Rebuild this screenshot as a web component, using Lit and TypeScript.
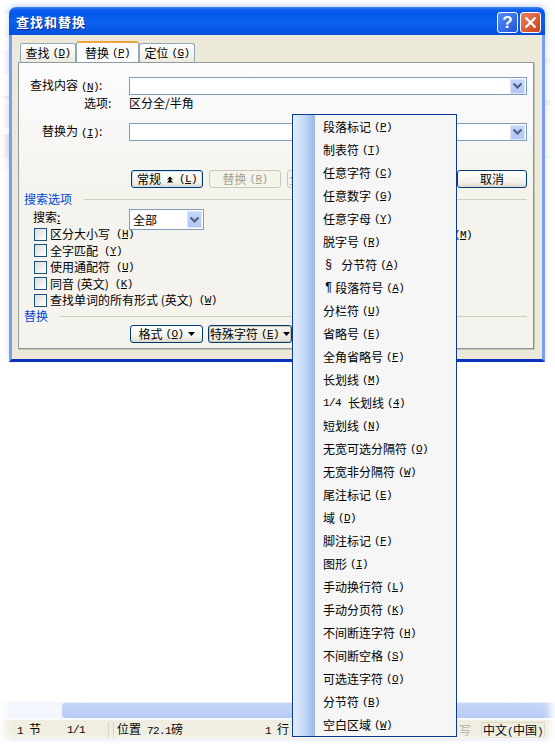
import { LitElement, html, css, svg } from "lit";
import { customElement } from "lit/decorators.js";

const k = (c: string) => html`<span class="k">(<u>${c}</u>)</span>`;
const chevron = html`<span class="drop"><svg width="11" height="8" viewBox="0 0 11 8"><path d="M1.5 1.5 L5.5 5.5 L9.5 1.5" fill="none" stroke="#4d6185" stroke-width="2.2"/></svg></span>`;
const tri = svg`<path d="M0 0H7L3.5 4Z" fill="#000"/>`;
const arrow = html`<svg class="tri" width="7" height="4" viewBox="0 0 7 4">${tri}</svg>`;

const menu: [string, string][] = [
  ["段落标记", "P"], ["制表符", "T"], ["任意字符", "C"], ["任意数字", "G"], ["任意字母", "Y"], ["脱字号", "R"],
  ["§§分节符", "A"], ["¶¶段落符号", "A"], ["分栏符", "U"], ["省略号", "E"], ["全角省略号", "F"], ["长划线", "M"],
  ["1/4 长划线", "4"], ["短划线", "N"], ["无宽可选分隔符", "O"], ["无宽非分隔符", "W"], ["尾注标记", "E"], ["域", "D"],
  ["脚注标记", "F"], ["图形", "I"], ["手动换行符", "L"], ["手动分页符", "K"], ["不间断连字符", "H"], ["不间断空格", "S"],
  ["可选连字符", "O"], ["分节符", "B"], ["空白区域", "W"],
];

const checks: [string, string][] = [
  ["区分大小写", "H"], ["全字匹配", "Y"], ["使用通配符", "U"], ["同音 (英文)", "K"], ["查找单词的所有形式 (英文)", "W"],
];

@customElement("app-root")
export class AppRoot extends LitElement {
  static styles = css`
    :host { display: block; width: 555px; height: 745px; position: relative; overflow: hidden; background: #fff;
      font: 12px/16px "Noto Sans CJK SC", sans-serif; color: #000; }
    .k { font: 11px/16px "Liberation Mono", monospace; letter-spacing: -0.6px; margin-left: 3px; }
    .m { font: 11px/16px "Liberation Mono", monospace; letter-spacing: -0.6px; }
    .gap { margin-left: 6px; }
    .desk { height: 739px; display: flex; flex-direction: column; }
    .doc { flex: 1; }
    .scroll { height: 16px; margin-bottom: 2px; background: #f4f6fd; display: flex; padding-left: 62px; border-top: 1px solid #eef1fb; box-sizing: border-box; }
    .thumb { flex: 1; background: linear-gradient(#c6d6f8, #b7ccf5); border-radius: 3px 0 0 3px; }
    .status { height: 19px; background: #f0eee1; display: flex; align-items: center; padding-left: 17px; box-shadow: 0 2px 5px rgba(130,155,235,.35); }
    .sec { white-space: nowrap; }
    .s1 { width: 50px; }
    .s2 { width: 41px; }
    .sep { width: 6px; height: 16px; border-left: 1px solid #d8d5c4; border-right: 1px solid #d8d5c4; margin-right: 3px; box-sizing: border-box; }
    .s3 { width: 148px; }
    .s4 { width: 194px; }
    .s5 { width: 22px; color: #b5b3a6; }
    .s6 { width: 64px; border: 1px solid #dbd8c6; box-sizing: border-box; padding-left: 1px; height: 16px; line-height: 14px; }
    .edge { position: absolute; top: 0; width: 11px; height: 190px; }
    .edge.l { left: 0; background: linear-gradient(#f1f3fc 0 10px, #e6e8f0 10px 14px, #f6f7fc 14px 30px, #eceef5 30px 38px, #fff 38px 50px, #e9eefb 50px 74px, #fff 74px 96px, #d5dcea 96px 99px, #f6f7fb 99px 104px, #ebecef 104px 128px, #fff 128px 134px, #d9dbe0 134px 158px, #f2f2f2 158px 170px, #fff 170px);
      -webkit-mask-image: linear-gradient(to left, #000, rgba(0,0,0,.35)); }
    .edge.r { right: 0; background: linear-gradient(#f1f3fc 0 46px, #f6f8fd 46px 58px, #e9ecf5 58px 64px, #f6f8fd 64px 100px, #e3e6ee 100px 105px, #f7f8fb 105px 155px, #eceef3 155px 158px, #fff 158px);
      -webkit-mask-image: linear-gradient(to right, #000, rgba(0,0,0,.2)); }
    .topband { position: absolute; left: 0; right: 0; top: 0; height: 8px; background: linear-gradient(#fbfcff, #eef1fc); }
    .vig { position: absolute; inset: 0; box-shadow: inset 0 0 9px 5px #fff; pointer-events: none; }

    .dialog { position: absolute; left: 9px; top: 7px; width: 536px; height: 355px; display: flex; flex-direction: column; box-shadow: 0 -2px 5px rgba(120,145,235,.25); border-radius: 7px 7px 0 0; }
    .title { height: 28px; border-radius: 7px 7px 0 0; background: linear-gradient(#3f86f4 0, #0b5df0 3px, #0458e6 7px, #0a62ee 14px, #0555e4 24px, #0a4fd8 28px);
      display: flex; align-items: center; padding: 0 4px 0 7px; gap: 2px; }
    .title b { flex: 1; color: #fff; font-size: 13px; letter-spacing: 1px; font-weight: 700; text-shadow: 1px 1px 0 #0a2a90; padding-top: 2px; }
    .wb { width: 21px; height: 21px; box-sizing: border-box; border: 1px solid #fff; border-radius: 3px; display: flex; align-items: center; justify-content: center; margin-top: 2px; }
    .help { background: linear-gradient(135deg, #5a8cf5, #1d55d8); color: #fff; font: 700 17px/19px "Liberation Sans", sans-serif; }
    .close { background: linear-gradient(135deg, #e9825f, #cf3f14); }
    .body { flex: 1; min-height: 0; background: #ece9d8; border: solid #7a9ef2; border-width: 0 3px; border-bottom: 3px solid #0a30c4; padding: 7px 8px 10px 6px; display: flex; flex-direction: column; }
    .tabs { display: flex; padding-left: 2px; height: 20px; position: relative; z-index: 1; }
    .tab { width: 56px; height: 19px; margin-top: 1px; box-sizing: border-box; border: 1px solid #91a7b4; border-bottom: 0; border-radius: 3px 3px 0 0; background: linear-gradient(#fff, #ecebe0); display: flex; align-items: center; justify-content: center; white-space: nowrap; }
    .tab.on { width: 63px; height: 21px; margin-top: -1px; background: #fcfcfe; border-top: 2px solid #f0a33a; border-left-color: #91a7b4; }
    .panel { flex: 1; min-height: 0; border: 1px solid #919b9c; border-right-color: #8d9697; border-bottom-color: #8d9697; box-shadow: 1px 1px 0 #c4c2b4; background: linear-gradient(#fcfcfe, #f4f3ee 45%); padding: 14px 6px 0 10px; display: flex; flex-direction: column; }
    .grid { display: grid; grid-template-columns: 100px 1fr; align-items: center; }
    .lab { white-space: nowrap; }
    .lab.a { margin-left: 1px; }
    .lab.b { margin-left: 55px; }
    .lab.c { margin-left: 13px; }
    .field { height: 18px; box-sizing: border-box; border: 1px solid #7f9db9; background: #fff; display: flex; justify-content: flex-end; align-items: center; padding-right: 1px; }
    .drop { width: 15px; height: 15px; background: linear-gradient(#c6d6fa, #b3c7f5); border: 1px solid #dde6fb; box-sizing: border-box; display: flex; align-items: center; justify-content: center; }
    .grid.opt { height: 28px; align-items: start; }
    .btns { display: flex; gap: 6px; margin: 29px 0 0 102px; height: 18px; }
    .btn { height: 18px; box-sizing: border-box; border: 1px solid #003c74; border-radius: 3px; background: linear-gradient(#fff, #f3f2ea 70%, #dcd8cc); display: flex; align-items: center; justify-content: center; white-space: nowrap; width: 72px; }
    .btn.def { box-shadow: inset 0 0 0 1px #cfe0f5; }
    .btn.off { border-color: #c9c7ba; color: #a1a192; background: #f5f4ea; }
    .btn.off .k { color: #a1a192; }
    .btn.under { justify-content: flex-start; overflow: hidden; padding-left: 1px; }
    .btn.wide { width: 85px; flex: none; }
    .btn.cancel { margin-left: auto; width: 70px; }
    .btn .tri { margin-left: 4px; }
    .updn { margin: 0 6px; }
    .def .k { margin-left: 0; }
    .head { display: flex; align-items: center; gap: 12px; margin-left: -5px; color: #0046d5; height: 15px; white-space: nowrap; }
    .head i { flex: 1; height: 1px; background: #d2d1c0; margin-top: 1px; }
    .h1 { margin-top: 3px; }
    .search { display: grid; grid-template-columns: 100px 75px; height: 17px; margin-top: 3px; }
    .search span.t { margin-left: 4px; }
    .search u { text-decoration: underline; }
    .sel { height: 21px; box-sizing: border-box; border: 1px solid #7f9db9; background: #fff; display: flex; align-items: center; justify-content: space-between; padding: 0 1px 0 3px; position: relative; z-index: 1; }
    .sel .drop { height: 17px; }
    .row { height: 16.5px; display: flex; align-items: center; margin-left: 5px; white-space: nowrap; gap: 3px; }
    .box { width: 13px; height: 13px; box-sizing: border-box; border: 1px solid #1c5180; background: linear-gradient(135deg, #dcdcd7, #fff); }
    .right { margin-left: auto; margin-right: 55px; }
    .btns2 { display: flex; gap: 5px; margin: 1.5px 0 0 101px; }
    .btns2 .f1 { width: 73px; }
    .btns2 .f2 { width: 84px; background: linear-gradient(#f6f5ee, #e6e3d8); box-shadow: inset 0 0 0 1px #c9c6b5; }

    .menu { position: absolute; left: 292px; top: 114px; width: 165px; height: 623px; box-sizing: border-box; border: 1px solid #0a3a9c; background: #f6f6f6; display: flex; flex-direction: column; overflow: hidden; }
    .menu::before { content: ""; position: absolute; left: 0; top: 0; bottom: 0; width: 22px; background: linear-gradient(to right, #e3eefd, #c5d9f7 50%, #9bb8e8); }
    .it { height: 23px; flex: none; display: flex; align-items: center; padding-left: 30px; white-space: nowrap; position: relative; }
    .sym { font: 12px/16px "Liberation Mono", monospace; margin-left: 2px; margin-right: 8px; }
    .sym.s { margin-right: 9px; }
    .sym.p { margin-right: 3px; }
    .frac { margin-right: 7px; }
  `;

  private item(t: string, c: string) {
    if (t.startsWith("§§")) return html`<div class="it"><span class="sym s">§</span>${t.slice(2)}${k(c)}</div>`;
    if (t.startsWith("¶¶")) return html`<div class="it"><span class="sym p">¶</span>${t.slice(2)}${k(c)}</div>`;
    if (t.startsWith("1/4")) return html`<div class="it"><span class="m frac">1/4</span>长划线${k(c)}</div>`;
    return html`<div class="it">${t}${k(c)}</div>`;
  }

  render() {
    return html`
      <div class="desk">
        <div class="doc"></div>
        <div class="scroll"><div class="thumb"></div></div>
        <div class="status">
          <span class="sec s1"><span class="m">1</span><span class="gap">节</span></span>
          <span class="sec s2 m">1/1</span>
          <span class="sep"></span>
          <span class="sec s3">位置<span class="m gap">72.1</span>磅</span>
          <span class="sec s4"><span class="m">1</span><span class="gap">行</span></span>
          <span class="sec s5">写</span>
          <span class="sec s6">中文<span class="m">(</span>中国<span class="m">)</span></span>
        </div>
      </div>
      <div class="topband"></div>
      <div class="edge l"></div>
      <div class="edge r"></div>
      <div class="vig"></div>

      <div class="dialog">
        <div class="title">
          <b>查找和替换</b>
          <span class="wb help">?</span>
          <span class="wb close"><svg width="13" height="13" viewBox="0 0 13 13"><path d="M1.5 1.5 L11.5 11.5 M11.5 1.5 L1.5 11.5" stroke="#fff" stroke-width="2.4" fill="none"/></svg></span>
        </div>
        <div class="body">
          <div class="tabs">
            <div class="tab">查找${k("D")}</div>
            <div class="tab on">替换${k("P")}</div>
            <div class="tab">定位${k("G")}</div>
          </div>
          <div class="panel">
            <div class="grid">
              <span class="lab a">查找内容${k("N")}:</span>
              <div class="field">${chevron}</div>
            </div>
            <div class="grid opt">
              <span class="lab b">选项:</span>
              <span>区分全/半角</span>
            </div>
            <div class="grid">
              <span class="lab c">替换为${k("I")}:</span>
              <div class="field">${chevron}</div>
            </div>
            <div class="btns">
              <div class="btn def">常规<svg class="updn" width="6" height="7" viewBox="0 0 7 7"><path d="M3.5 0L7 3.5H0Z M3.5 3L7 7H0Z"/></svg>${k("L")}</div>
              <div class="btn off">替换${k("R")}</div>
              <div class="btn off under">全</div>
              <div class="btn wide"></div>
              <div class="btn cancel">取消</div>
            </div>
            <div class="head h1">搜索选项<i></i></div>
            <div class="search">
              <span class="t">搜索<u>:</u></span>
              <div class="sel">全部${chevron}</div>
            </div>
            ${checks.map(([t, c], i) => html`
              <div class="row"><span class="box"></span>${t}${k(c)}${i === 0 ? html`<span class="right">${k("M")}</span>` : ""}</div>`)}
            <div class="head">替换<i></i></div>
            <div class="btns2">
              <div class="btn f1">格式${k("O")}${arrow}</div>
              <div class="btn f2">特殊字符${k("E")}${arrow}</div>
            </div>
          </div>
        </div>
      </div>

      <div class="menu">${menu.map(([t, c]) => this.item(t, c))}</div>
    `;
  }
}
